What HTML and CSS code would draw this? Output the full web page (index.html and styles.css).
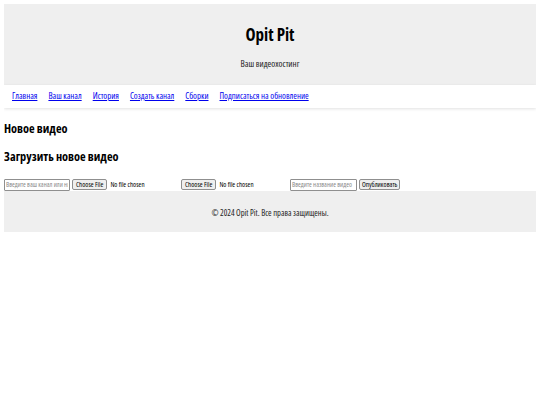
FILE: index.html
```html
<!DOCTYPE html>
<html lang="ru">
<head>
<meta charset="utf-8">
<title>Opit Pit</title>
<link rel="stylesheet" href="styles.css">
</head>
<body>
<header class="site-header">
  <h1 class="site-title">Opit Pit</h1>
  <p class="site-tagline">Ваш видеохостинг</p>
</header>
<nav class="site-nav">
  <a href="#">Главная</a>
  <a href="#">Ваш канал</a>
  <a href="#">История</a>
  <a href="#">Создать канал</a>
  <a href="#">Сборки</a>
  <a href="#">Подписаться на обновление</a>
</nav>
<main class="content">
  <h2 class="section-title">Новое видео</h2>
  <h2 class="section-title">Загрузить новое видео</h2>
  <form class="upload-form">
    <input class="text-field text-field-channel" type="text" placeholder="Введите ваш канал или ник">
    <input class="file-field" type="file">
    <input class="file-field" type="file">
    <input class="text-field text-field-title" type="text" placeholder="Введите название видео">
    <button class="submit-btn" type="button">Опубликовать</button>
  </form>
</main>
<footer class="site-footer">
  <p class="footer-text">© 2024 Opit Pit. Все права защищены.</p>
</footer>
</body>
</html>
```

FILE: styles.css
```css
html, body {
  background: #ffffff;
}
body {
  margin: 4px;
  font-family: "Open Sans", "Liberation Sans", Arial, sans-serif;
  font-stretch: 75%;
  color: #000;
}
.site-header {
  background: #efefef;
  text-align: center;
  padding: 20px 0 16px;
}
.site-title {
  margin: 0;
  font-size: 17px;
  line-height: 22px;
  font-weight: bold;
  color: #000;
}
.site-tagline {
  margin: 12px 0 0;
  font-size: 9px;
  line-height: 11px;
  color: #222;
}
.site-nav {
  display: flex;
  gap: 11px;
  padding: 6px 8px;
  background: #fff;
  box-shadow: 0 1px 3px rgba(0, 0, 0, 0.12);
  font-size: 8.8px;
  line-height: 11px;
}
.site-nav a {
  color: #0000ee;
  text-decoration: underline;
}
.section-title {
  margin: 14px 0;
  font-size: 12.3px;
  line-height: 14px;
  font-weight: bold;
}
.upload-form {
  display: flex;
  align-items: center;
  gap: 2px;
  height: 13px;
  margin: 0;
}
.text-field {
  box-sizing: border-box;
  height: 12px;
  padding: 0 1px;
  border: 1px solid #8f8f8f;
  border-radius: 1px;
  font-family: inherit;
  font-stretch: 75%;
  font-size: 6.8px;
  color: #000;
  background: #fff;
}
.text-field::placeholder {
  color: #8a8a8a;
}
.text-field-channel {
  width: 66px;
}
.text-field-title {
  width: 67px;
}
.file-field {
  width: 107px;
  height: 12px;
  font-family: inherit;
  font-stretch: 75%;
  font-size: 7px;
  color: #000;
}
.file-field::file-selector-button {
  height: 11px;
  margin: 0 3px 0 0;
  padding: 0 3px;
  border: 1px solid #8f8f8f;
  border-radius: 2px;
  background: #efefef;
  font-family: inherit;
  font-stretch: 75%;
  font-size: 7px;
  color: #000;
}
.submit-btn {
  box-sizing: border-box;
  height: 11px;
  padding: 0 2px;
  border: 1px solid #8f8f8f;
  border-radius: 2px;
  background: #efefef;
  font-family: inherit;
  font-stretch: 75%;
  font-size: 7px;
  line-height: 9px;
  color: #000;
}
.site-footer {
  background: #efefef;
  text-align: center;
  padding: 16px 0 14px;
}
.footer-text {
  margin: 0;
  font-size: 8.5px;
  line-height: 11px;
  color: #222;
}
```
